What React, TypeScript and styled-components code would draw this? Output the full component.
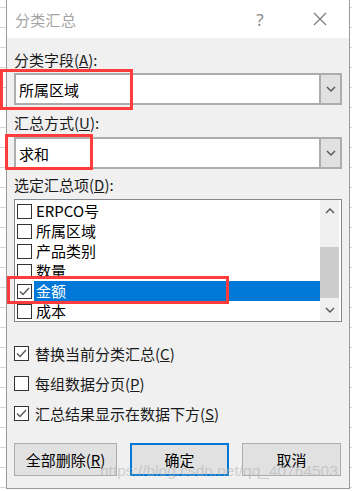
import styled, { createGlobalStyle } from 'styled-components';

const GlobalStyle = createGlobalStyle`
  html, body {
    margin: 0;
    padding: 0;
    background: #ffffff;
  }
  body {
    font-family: "Noto Sans CJK SC", "Noto Sans", sans-serif;
  }
`;

const Page = styled.div`
  position: relative;
  width: 352px;
  height: 491px;
  overflow: hidden;
  display: flex;
  padding-left: 6px;
  box-sizing: border-box;
  background-color: #ffffff;
  background-image: linear-gradient(#d4d4d4 1px, transparent 1px);
  background-size: 100% 20px;
  background-position: 0 7px;
`;

const Dialog = styled.div`
  width: 344px;
  height: 489px;
  box-sizing: border-box;
  border: 1px solid #9a9a9a;
  border-top: none;
  background: #f0f0f0;
  display: flex;
  flex-direction: column;
`;

const TitleBar = styled.div`
  height: 38px;
  background: #ffffff;
  display: flex;
  align-items: center;
  padding-left: 8px;
  color: #a3a3a3;
  font-size: 15px;
`;

const TitleText = styled.span`
  margin-right: auto;
  letter-spacing: 0.3px;
`;

const HelpMark = styled.span`
  font-family: "Noto Sans", sans-serif;
  font-size: 17px;
  color: #8a8a8a;
  width: 14px;
  text-align: center;
  margin-right: 46px;
`;

const CloseBtn = styled.span`
  display: flex;
  width: 14px;
  margin-right: 22px;
`;

const Body = styled.div`
  flex: 1;
  display: flex;
  flex-direction: column;
  padding: 0 7px 0 7px;
`;

const Label = styled.div<{ top: number }>`
  margin-top: ${(p) => p.top}px;
  height: 20px;
  line-height: 20px;
  font-size: 15px;
  color: #1a1a1a;
`;

const Combo = styled.div<{ top: number }>`
  margin-top: ${(p) => p.top}px;
  height: 32px;
  box-sizing: border-box;
  border: 2px solid #adadad;
  background: #ffffff;
  display: flex;
  align-items: stretch;
`;

const ComboValue = styled.div`
  flex: 1;
  display: flex;
  align-items: center;
  padding-left: 3px;
  font-size: 15px;
  color: #000;
`;

const ComboButton = styled.div`
  width: 19px;
  border-left: 2px solid #adadad;
  background: #e1e1e1;
  display: flex;
  align-items: center;
  justify-content: center;
`;

const ListBox = styled.div`
  margin-top: 4px;
  height: 123px;
  box-sizing: border-box;
  border: 1px solid #828790;
  background: #ffffff;
  display: flex;
`;

const ListItems = styled.div`
  flex: 1;
  padding-top: 1px;
  overflow: hidden;
`;

const ListRow = styled.div`
  height: 20px;
  display: flex;
  align-items: center;
  padding-left: 2px;
`;

const RowText = styled.div<{ selected?: boolean }>`
  flex: 1;
  margin-left: 2px;
  height: 20px;
  line-height: 20px;
  padding-left: 2px;
  font-size: 15px;
  color: ${(p) => (p.selected ? '#ffffff' : '#000000')};
  background: ${(p) => (p.selected ? '#0078d7' : 'transparent')};
`;

const ScrollBar = styled.div`
  width: 19px;
  margin-right: 2px;
  background: #f0f0f0;
  display: flex;
  flex-direction: column;
`;

const ScrollArrow = styled.div`
  height: 22px;
  display: flex;
  align-items: center;
  justify-content: center;
`;

const ScrollTrack = styled.div`
  flex: 1;
`;

const ScrollThumb = styled.div`
  margin-top: 25px;
  height: 51px;
  background: #cdcdcd;
`;

const Box = styled.div`
  width: 15px;
  height: 15px;
  box-sizing: border-box;
  border: 1px solid #333333;
  background: #ffffff;
  display: flex;
  align-items: center;
  justify-content: center;
  flex-shrink: 0;
`;

const OptionRow = styled.div<{ first?: boolean }>`
  margin-top: ${(p) => (p.first ? 16 : 0)}px;
  height: 30px;
  display: flex;
  align-items: center;
  gap: 6px;
  font-size: 15px;
  color: #1a1a1a;
`;

const ButtonRow = styled.div`
  margin-top: 15px;
  display: grid;
  grid-template-columns: 103px 99px 99px;
  column-gap: 13px;
`;

const Button = styled.div<{ primary?: boolean }>`
  height: 33px;
  box-sizing: border-box;
  border: ${(p) => (p.primary ? '2px solid #0078d7' : '1px solid #adadad')};
  background: #e1e1e1;
  display: flex;
  align-items: center;
  justify-content: center;
  font-size: 15px;
  color: #000;
`;

const Highlight = styled.div`
  position: absolute;
  box-sizing: border-box;
  border: 3px solid #ff3b3b;
  pointer-events: none;
`;

const Watermark = styled.div`
  position: absolute;
  left: 100px;
  top: 462px;
  font-family: "Liberation Sans", Arial, sans-serif;
  font-size: 15.5px;
  color: rgba(175, 175, 175, 0.55);
  pointer-events: none;
  white-space: nowrap;
`;

const Chevron = ({ up }: { up?: boolean }) => (
  <svg width="10" height="6" viewBox="0 0 10 6">
    <polyline
      points={up ? '1,5 5,1 9,5' : '1,1 5,5 9,1'}
      fill="none"
      stroke="#555"
      strokeWidth="1.4"
    />
  </svg>
);

const Check = () => (
  <svg width="13" height="13" viewBox="0 0 13 13">
    <polyline points="2,6.5 5,9.5 11,3" fill="none" stroke="#555" strokeWidth="1.3" />
  </svg>
);

const CheckBox = ({ checked }: { checked?: boolean }) => <Box>{checked ? <Check /> : null}</Box>;

const fields = [
  { name: 'ERPCO号', checked: false },
  { name: '所属区域', checked: false },
  { name: '产品类别', checked: false },
  { name: '数量', checked: false },
  { name: '金额', checked: true, selected: true },
  { name: '成本', checked: false },
];

export default function App() {
  return (
    <>
      <GlobalStyle />
      <Page>
        <Dialog>
          <TitleBar>
            <TitleText>分类汇总</TitleText>
            <HelpMark>?</HelpMark>
            <CloseBtn>
              <svg width="14" height="14" viewBox="0 0 14 14">
                <path d="M1 1 L13 13 M13 1 L1 13" stroke="#777" strokeWidth="1.1" />
              </svg>
            </CloseBtn>
          </TitleBar>
          <Body>
            <Label top={12}>
              分类字段(<u>A</u>):
            </Label>
            <Combo top={3}>
              <ComboValue>所属区域</ComboValue>
              <ComboButton>
                <Chevron />
              </ComboButton>
            </Combo>
            <Label top={8}>
              汇总方式(<u>U</u>):
            </Label>
            <Combo top={4}>
              <ComboValue>求和</ComboValue>
              <ComboButton>
                <Chevron />
              </ComboButton>
            </Combo>
            <Label top={6}>
              选定汇总项(<u>D</u>):
            </Label>
            <ListBox>
              <ListItems>
                {fields.map((f) => (
                  <ListRow key={f.name}>
                    <CheckBox checked={f.checked} />
                    <RowText selected={f.selected}>{f.name}</RowText>
                  </ListRow>
                ))}
              </ListItems>
              <ScrollBar>
                <ScrollArrow>
                  <Chevron up />
                </ScrollArrow>
                <ScrollTrack>
                  <ScrollThumb />
                </ScrollTrack>
                <ScrollArrow>
                  <Chevron />
                </ScrollArrow>
              </ScrollBar>
            </ListBox>
            <OptionRow first>
              <CheckBox checked />
              <span>
                替换当前分类汇总(<u>C</u>)
              </span>
            </OptionRow>
            <OptionRow>
              <CheckBox />
              <span>
                每组数据分页(<u>P</u>)
              </span>
            </OptionRow>
            <OptionRow>
              <CheckBox checked />
              <span>
                汇总结果显示在数据下方(<u>S</u>)
              </span>
            </OptionRow>
            <ButtonRow>
              <Button>
                全部删除(<u>R</u>)
              </Button>
              <Button primary>确定</Button>
              <Button>取消</Button>
            </ButtonRow>
          </Body>
        </Dialog>
        <Highlight style={{ left: 0, top: 69, width: 133, height: 41 }} />
        <Highlight style={{ left: 5, top: 134, width: 88, height: 36 }} />
        <Highlight style={{ left: 7, top: 276, width: 222, height: 28 }} />
        <Watermark>https://blog.csdn.net/qq_40764503</Watermark>
      </Page>
    </>
  );
}
